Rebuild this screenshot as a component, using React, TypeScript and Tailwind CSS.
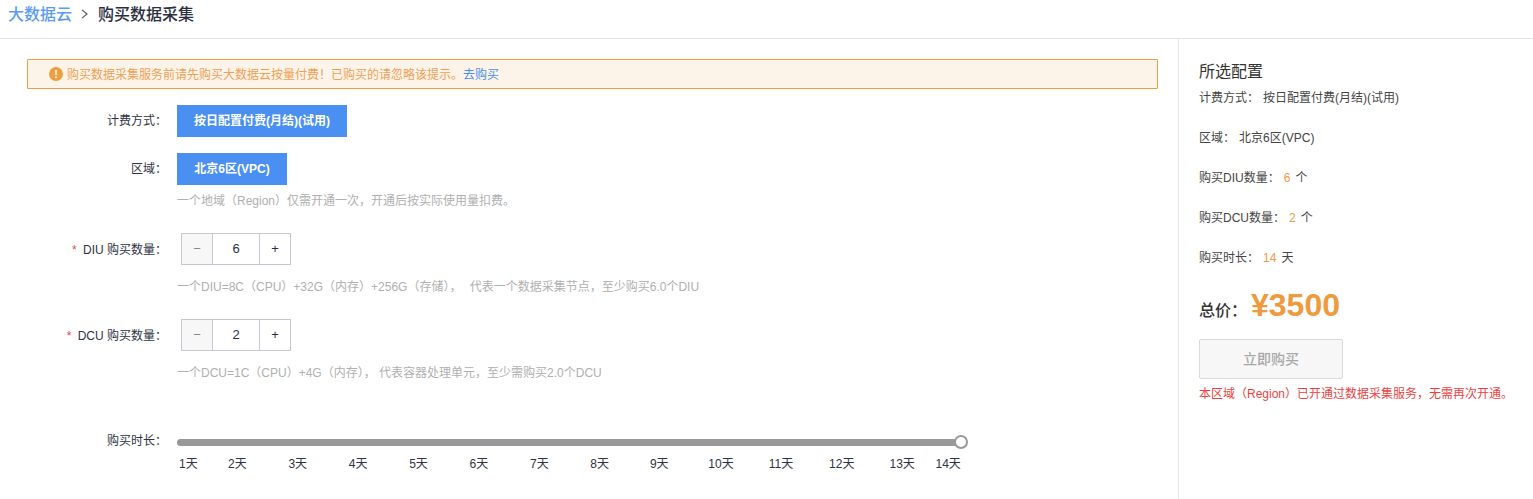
const days = ["1天", "2天", "3天", "4天", "5天", "6天", "7天", "8天", "9天", "10天", "11天", "12天", "13天", "14天"];

function Stepper({ value }: { value: number }) {
  return (
    <div className="flex h-8 w-[110px] border border-[#c8c8d0] text-[13px] text-[#2a2f45]">
      <div className="flex w-[30px] items-center justify-center bg-[#f7f7f7] text-[#888]">−</div>
      <div className="flex w-[48px] items-center justify-center border-x border-[#c8c8d0]">{value}</div>
      <div className="flex flex-1 items-center justify-center">+</div>
    </div>
  );
}

function Row({ label, star, children }: { label: string; star?: boolean; children: React.ReactNode }) {
  return (
    <div className="flex">
      <div className={`w-[143px] pr-[3px] text-right leading-[15px] text-[#2f3345] ${star ? "pt-[10px]" : "pt-[9px]"}`}>
        {star && <span className="mr-[3px] text-[#e5484d]">*</span>}
        {star && " "}
        {label}
      </div>
      <div className="flex-1 pl-[7px]">{children}</div>
    </div>
  );
}

function Option({ text, width }: { text: string; width: string }) {
  return (
    <div className={`flex h-8 items-center justify-center bg-[#4a8ff2] font-semibold text-white ${width}`}>{text}</div>
  );
}

function Summary({ label, value, unit }: { label: string; value: string; unit?: string }) {
  return (
    <div className="h-10 leading-[18px] text-[#444]">
      <span>{label}：</span>
      <span className={unit ? "ml-1 text-[#ef9a45]" : "ml-1"}>{value}</span>
      {unit && <span className="ml-[5px]">{unit}</span>}
    </div>
  );
}

export default function App() {
  return (
    <div className="h-[499px] w-[1533px] overflow-hidden bg-white font-['Liberation_Sans','Noto_Sans_CJK_SC',sans-serif] text-xs">
      <div className="flex h-[39px] items-start border-b border-[#e6e6e6] pl-2 pt-1 text-base font-medium leading-[22px]">
        <span className="text-[#5b9bf5]">大数据云</span>
        <svg className="mx-2 mt-[5px]" width="10" height="10" viewBox="0 0 10 10" fill="none" stroke="#555" strokeWidth="1.1">
          <path d="M2 .8 7 5 2 9.2" />
        </svg>
        <span className="text-[#2c2f3f]">购买数据采集</span>
      </div>

      <div className="flex h-[460px]">
        <div className="w-[1178px] pl-[27px] pt-5">
          <div className="flex h-[30px] w-[1131px] items-center rounded-[1px] border border-[#ee9d3f] bg-[#fdf4e9] pl-[21px] pt-[2px] text-[#f0a055]">
            <span className="mb-[2px] mr-1 flex h-[14px] w-[14px] items-center justify-center rounded-full bg-[#ee9d3f] text-[11px] font-bold leading-none text-white">!</span>
            购买数据采集服务前请先购买大数据云按量付费！已购买的请忽略该提示。
            <span className="text-[#4a8ff2]">去购买</span>
          </div>

          <div className="mt-4 flex flex-col">
            <Row label="计费方式：">
              <Option text="按日配置付费(月结)(试用)" width="w-[170px]" />
            </Row>
            <div className="mt-4">
              <Row label="区域：">
                <Option text="北京6区(VPC)" width="w-[110px]" />
                <p className="mt-2 leading-[16px] text-[#b0b0b0]">一个地域（Region）仅需开通一次，开通后按实际使用量扣费。</p>
              </Row>
            </div>
            <div className="mt-6">
              <Row label="DIU 购买数量：" star>
                <div className="ml-1"><Stepper value={6} /></div>
                <p className="mt-[14px] leading-[16px] text-[#b0b0b0]">
                  一个DIU=8C（CPU）+32G（内存）+256G（存储）， <span className="ml-[5px]">代表一个数据采集节点，至少购买6.0个DIU</span>
                </p>
              </Row>
            </div>
            <div className="mt-6">
              <Row label="DCU 购买数量：" star>
                <div className="ml-1"><Stepper value={2} /></div>
                <p className="mt-[14px] leading-[16px] text-[#b0b0b0]">一个DCU=1C（CPU）+4G（内存）， 代表容器处理单元，至少需购买2.0个DCU</p>
              </Row>
            </div>
            <div className="mt-[51px] flex">
              <div className="w-[143px] pr-[3px] pt-[2px] text-right leading-[15px] text-[#2f3345]">购买时长：</div>
              <div className="w-[800px] pl-[7px] pt-[7px]">
                <div className="relative h-[7px] w-[784px] rounded-full bg-[#999]">
                  <div className="absolute right-[-7px] top-[-4px] h-[14px] w-[14px] rounded-full border-2 border-[#999] bg-white" />
                </div>
                <div className="mt-[11px] flex pl-[2px] leading-[15px] text-[#2f3345]">
                  {days.map((day, i) => (
                    <span key={day} className={i === 0 ? "w-[49px] shrink-0" : i === 7 ? "w-[59.6px] shrink-0" : i === 8 ? "w-[58.4px] shrink-0" : i === 12 ? "w-[46px] shrink-0" : "w-[60.4px] shrink-0"}>
                      {day}
                    </span>
                  ))}
                </div>
              </div>
            </div>
          </div>
        </div>

        <div className="flex-1 border-l border-[#e6e6e6] pl-5 pt-[23px]">
          <h2 className="text-base leading-[20px] text-[#333]">所选配置</h2>
          <div className="mt-[7px]">
            <Summary label="计费方式" value="按日配置付费(月结)(试用)" />
            <Summary label="区域" value="北京6区(VPC)" />
            <Summary label="购买DIU数量" value="6" unit="个" />
            <Summary label="购买DCU数量" value="2" unit="个" />
            <Summary label="购买时长" value="14" unit="天" />
          </div>
          <div className="mt-[-2px] flex items-end">
            <span className="pb-[1px] text-base font-medium leading-[22px] text-[#333]">总价：</span>
            <span className="ml-1 text-[32px] font-bold leading-[36px] text-[#ef9a3c]">¥3500</span>
          </div>
          <button className="mt-4 block h-10 w-[144px] rounded-[2px] border border-[#d9d9d9] bg-[#f7f7f7] text-sm font-medium text-[#a8a8a8]">立即购买</button>
          <p className="mt-[7px] leading-[16px] text-[#ef3f3f]">本区域（Region）已开通过数据采集服务，无需再次开通。</p>
        </div>
      </div>
    </div>
  );
}
